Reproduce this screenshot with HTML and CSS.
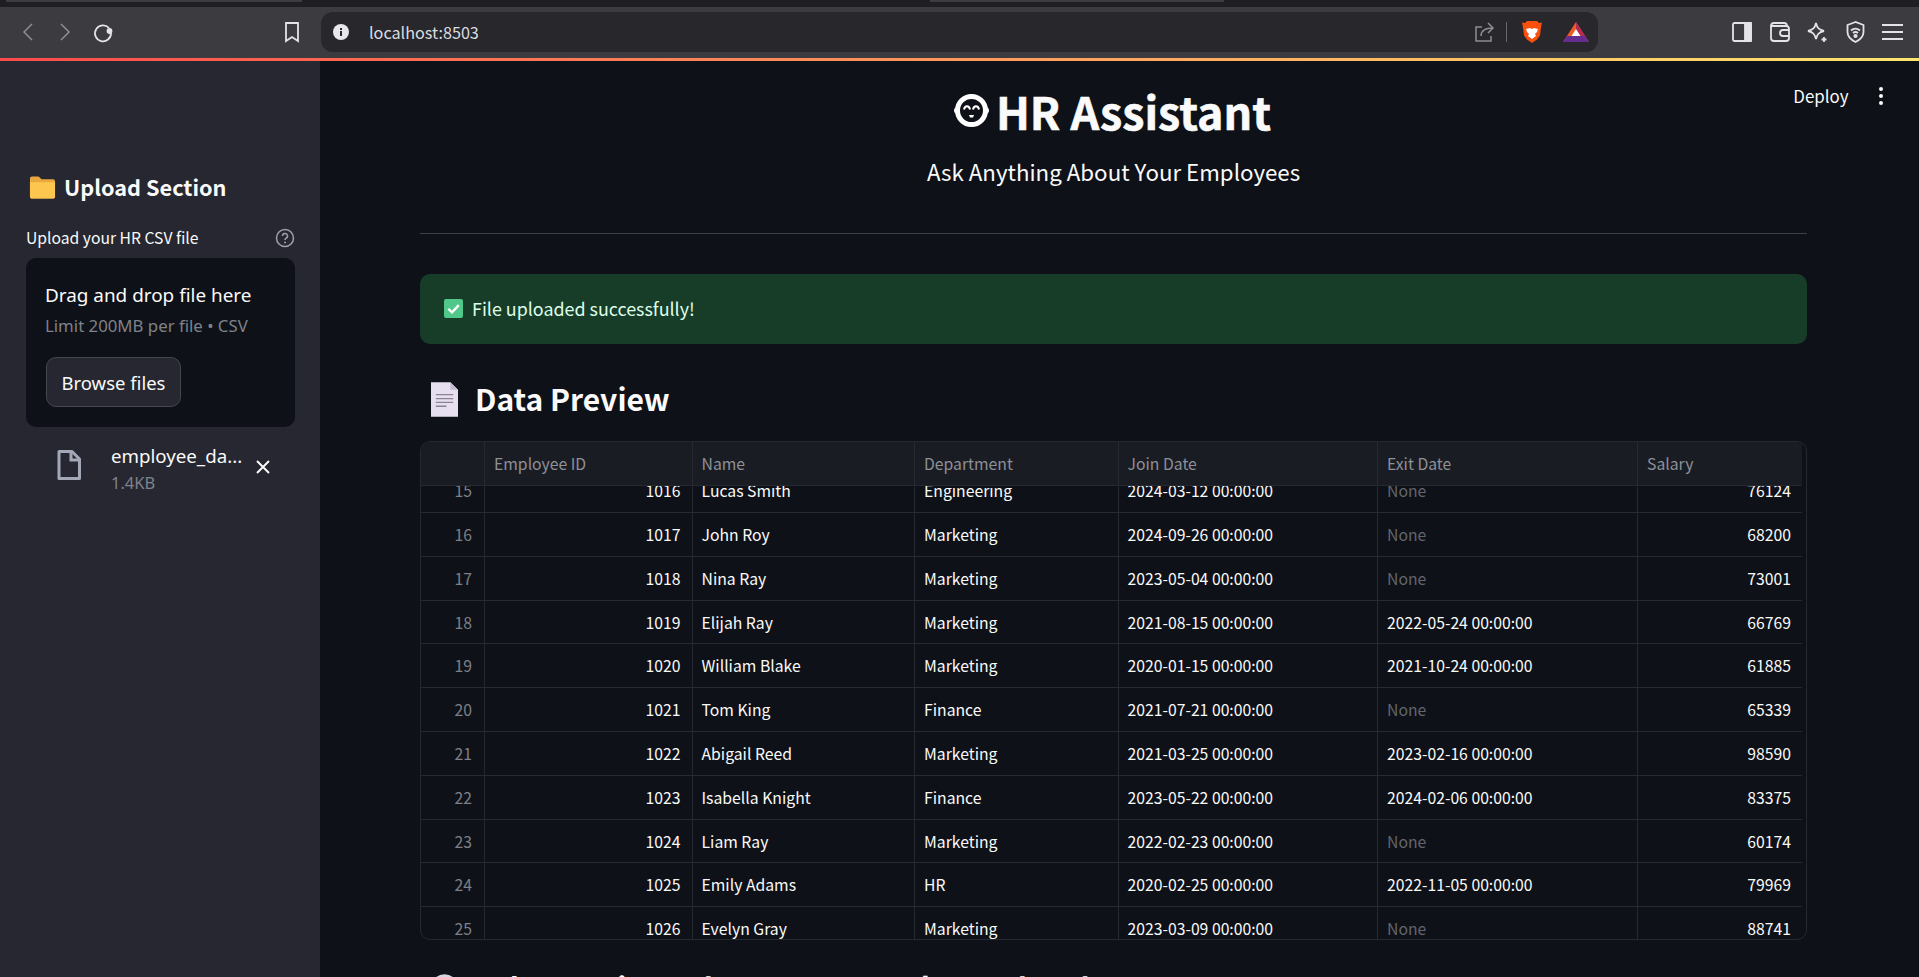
FILE: index.html
```html
<!DOCTYPE html>
<html lang="en">
<head>
  <meta charset="UTF-8" />
  <title>HR Assistant</title>
  <link rel="stylesheet" href="styles.css">
</head>
<body>
  <div class="tabstrip"><i class="tab-a"></i><i class="tab-b"></i></div>
  <header class="toolbar">
    <div class="nav-icons">
      <svg width="20" height="24" viewBox="0 0 20 24" class="dim"><path d="M14 4 6 12l8 8" /></svg>
      <svg width="20" height="24" viewBox="0 0 20 24" class="dim"><path d="m6 4 8 8-8 8" /></svg>
      <svg width="22" height="24" viewBox="0 0 22 24"><path d="M17 8a8 8 0 1 0 2 5" /><circle class="fill" cx="17.500" cy="11" r="2" /></svg>
    </div>
    <svg class="bookmark" width="18" height="22" viewBox="0 0 18 22"><path d="M3 2h12v18l-6-4-6 4z" /></svg>
    <div class="addressbar">
      <svg width="16" height="16" viewBox="0 0 16 16"><circle cx="8" cy="8" r="8" fill="#e8e8ec" stroke="none" /><rect x="7" y="7" width="2" height="5" fill="#27272c" stroke="none" /><rect x="7" y="4" width="2" height="2" fill="#27272c" stroke="none" /></svg>
      <span class="url">localhost:8503</span>
      <div class="addr-right">
        <svg class="dim" width="20" height="20" viewBox="0 0 20 20"><path d="M7 5H1v14h15v-5M6 14c0-5 4-8 12-8M13 1l5 5-5 5" /></svg>
        <i class="addr-sep"></i>
        <svg class="lion" width="20" height="22" viewBox="0 0 20 22"><path class="fill-lion" d="M5 0h10l2 2 3-.5-1 5-1 8-3 4-5 3.500-5-3.500-3-4-1-8-1-5L3 2z" /><path class="fill-white" d="M4 8l4-1 2 1 2-1 4 1-1 3-2 2 1 2-4 3-4-3 1-2-2-2z" /></svg>
        <svg class="bat" width="26" height="20" viewBox="0 0 26 20"><path d="M13 0 0 20h26z" class="bat-orange" /><path d="M13 0v14h9l4 6z" class="bat-red" /><path d="M0 20l4-6h18l4 6z" class="bat-purple" /><path d="m13 7 4.500 7h-9z" class="fill-white" /></svg>
      </div>
    </div>
    <div class="tool-icons">
      <svg width="20" height="20" viewBox="0 0 20 20"><rect x="1" y="1" width="18" height="18" rx="1.500" /><rect class="fill" x="13" y="1" width="6" height="18" /></svg>
      <svg width="20" height="20" viewBox="0 0 20 20"><path d="M1 4c0-2 1-3 3-3h10c2 0 3 1 3 3M1 4v12c0 2 1 3 3 3h12c2 0 3-1 3-3V7c0-2-1-3-3-3H1M19 8h-6a2.500 2.500 0 0 0 0 6h6" /></svg>
      <svg width="21" height="22" viewBox="0 0 21 22"><path d="M9 2c1 5 3 7 8 8-5 1-7 3-8 8-1-5-3-7-8-8 5-1 7-3 8-8zM17 16v5M14.500 18.500h5" /></svg>
      <svg width="19" height="22" viewBox="0 0 19 22"><path d="M9.500 1 1.500 4v7c0 5 4 8 8 10 4-2 8-5 8-10V4zM5 9.500c3-2.500 6-2.500 9 0M7 12c1.500-1.200 3.500-1.200 5 0" /><circle class="fill" cx="9.500" cy="15" r="1.200" /></svg>
      <svg width="21" height="18" viewBox="0 0 21 18"><path d="M0 2h21M0 9h21M0 16h21" /></svg>
    </div>
  </header>
  <div class="progress-line"></div>

  <div class="app">
    <aside class="sidebar">
      <h2 class="side-title">
        <svg width="27" height="24" viewBox="0 0 28 24"><path d="M1 3c0-1 1-2 2-2h7l3 3h12c1 0 2 1 2 2v16c0 1-1 2-2 2H3c-1 0-2-1-2-2z" fill="#e9a93f" /><path d="M1 7h26v15c0 1-1 2-2 2H3c-1 0-2-1-2-2z" fill="#fdc74f" /></svg>
        Upload Section
      </h2>
      <div class="upload-label">
        <span>Upload your HR CSV file</span>
        <svg width="20" height="20" viewBox="0 0 20 20"><circle cx="10" cy="10" r="8.500" /><path d="M7.500 8a2.500 2.500 0 1 1 3.700 2.200c-.8.500-1.200 1-1.200 1.800" /><circle class="fill" cx="10" cy="14.500" r="1" /></svg>
      </div>
      <div class="dropzone">
        <div class="drop-main">Drag and drop file here</div>
        <div class="drop-limit">Limit 200MB per file • CSV</div>
        <button class="browse">Browse files</button>
      </div>
      <div class="file-row">
        <svg class="file-icon" width="24" height="30" viewBox="0 0 24 30"><path d="M2 1.500h13L22.500 9v19.500H2z" fill="none" stroke="#a3a8b8" stroke-width="3" stroke-linejoin="round" /><path d="M14 1v9h9" fill="none" stroke="#a3a8b8" stroke-width="3" /></svg>
        <div class="file-info">
          <div class="file-name">employee_da...</div>
          <div class="file-size">1.4KB</div>
        </div>
        <svg class="file-x" width="16" height="16" viewBox="0 0 16 16"><path d="m2 2 12 12M14 2 2 14" /></svg>
      </div>
    </aside>

    <main class="main">
      <div class="deploy">
        <span>Deploy</span>
        <span class="kebab"><i></i><i></i><i></i></span>
      </div>
      <div class="content">
        <h1 class="title">
          <svg width="35" height="33" viewBox="0 0 35 33"><rect x="0" y="13.500" width="35" height="6" rx="3" fill="#fff" /><circle cx="17.500" cy="16.500" r="14" fill="#0e1117" stroke="#fff" stroke-width="5" /><path d="M10 15.500c.8-4.500 5.200-4.500 6 0M19 15.500c.8-4.500 5.200-4.500 6 0" fill="none" stroke="#fff" stroke-width="2" /><path d="M15 21h5l-1 2.500h-3z" fill="#fff" /></svg>
          HR Assistant
        </h1>
        <div class="subtitle">Ask Anything About Your Employees</div>
        <hr class="divider" />
        <div class="alert">
          <svg width="19" height="19" viewBox="0 0 20 20"><rect width="20" height="20" rx="2" fill="#4fc88a" /><path d="m4.500 10.500 4 3.500 7-7.500" fill="none" stroke="#fff" stroke-width="2.500" /></svg>
          File uploaded successfully!
        </div>
        <h2 class="section">
          <svg width="27" height="35" viewBox="0 0 28 36"><path d="M0 0h20l8 8v28H0z" fill="#e6dff0" /><path d="M20 0l8 8h-8z" fill="#c4bcd2" /><path d="M5 13h18M5 17h18M5 21h18M5 25h11" stroke="#8a8496" stroke-width="1.300" /></svg>
          Data Preview
        </h2>
        <div class="table">
          <div class="thead">
            <div class="th"></div>
            <div class="th">Employee ID</div>
            <div class="th">Name</div>
            <div class="th">Department</div>
            <div class="th">Join Date</div>
            <div class="th">Exit Date</div>
            <div class="th">Salary</div>
          </div>
          <div class="tbody">
            <div class="rows" id="rows"></div>
          </div>
        </div>
        <h2 class="section next-heading">
          <svg width="27" height="35" viewBox="0 0 28 36"><rect width="28" height="36" rx="14" fill="#d8d4e4" /></svg>
          Ask questions about your employee data here
        </h2>
      </div>
    </main>
  </div>

  <script>
    const data = [
      [15, 1016, 'Lucas Smith', 'Engineering', '2024-03-12 00:00:00', 'None', 76124],
      [16, 1017, 'John Roy', 'Marketing', '2024-09-26 00:00:00', 'None', 68200],
      [17, 1018, 'Nina Ray', 'Marketing', '2023-05-04 00:00:00', 'None', 73001],
      [18, 1019, 'Elijah Ray', 'Marketing', '2021-08-15 00:00:00', '2022-05-24 00:00:00', 66769],
      [19, 1020, 'William Blake', 'Marketing', '2020-01-15 00:00:00', '2021-10-24 00:00:00', 61885],
      [20, 1021, 'Tom King', 'Finance', '2021-07-21 00:00:00', 'None', 65339],
      [21, 1022, 'Abigail Reed', 'Marketing', '2021-03-25 00:00:00', '2023-02-16 00:00:00', 98590],
      [22, 1023, 'Isabella Knight', 'Finance', '2023-05-22 00:00:00', '2024-02-06 00:00:00', 83375],
      [23, 1024, 'Liam Ray', 'Marketing', '2022-02-23 00:00:00', 'None', 60174],
      [24, 1025, 'Emily Adams', 'HR', '2020-02-25 00:00:00', '2022-11-05 00:00:00', 79969],
      [25, 1026, 'Evelyn Gray', 'Marketing', '2023-03-09 00:00:00', 'None', 88741]
    ];
    const rows = document.getElementById('rows');
    data.forEach(r => {
      const div = document.createElement('div');
      div.className = 'row';
      div.innerHTML = `
        <div class="td idx">${r[0]}</div>
        <div class="td num">${r[1]}</div>
        <div class="td">${r[2]}</div>
        <div class="td">${r[3]}</div>
        <div class="td">${r[4]}</div>
        <div class="td ${r[5] === 'None' ? 'none' : ''}">${r[5]}</div>
        <div class="td num">${r[6]}</div>
      `;
      rows.appendChild(div);
    });
  </script>
</body>
</html>
```

FILE: styles.css
```css
:root {
  --bg: #0e1117;
  --side: #262730;
  --text: #fafafa;
  --muted: #7d8088;
  --line: #262a30;
  --cols: 64px 207.5px 222.5px 203.5px 259.5px 260px 164px;
}

html, body {
  margin: 0;
  height: 977px;
  overflow: hidden;
}

body {
  background: var(--bg);
  color: var(--text);
  font-family: "Noto Sans CJK SC", "Noto Sans", sans-serif;
  display: flex;
  flex-direction: column;
}

/* browser chrome */
.tabstrip {
  height: 7px;
  background: #1f1e23;
  flex: none;
  display: flex;
  align-items: flex-start;
}

.tabstrip i {
  height: 2px;
  background: #3b3b40;
}

.tab-a { width: 296px; margin-left: 6px; }
.tab-b { width: 294px; margin-left: 628px; }

.toolbar {
  height: 51px;
  flex: none;
  background: #3b3b40;
  display: flex;
  align-items: center;
  padding: 0 16px 1px 18px;
  box-sizing: border-box;
}

.toolbar svg {
  fill: none;
  stroke: #e4e4e8;
  stroke-width: 1.800;
}

.toolbar svg .fill,
.sidebar svg .fill { fill: #e4e4e8; }

.toolbar svg.dim { stroke: #8d8d93; stroke-width: 1.500; }

.nav-icons {
  display: flex;
  align-items: center;
  gap: 17px;
  width: 265px;
}

.bookmark { margin: 0 20px 0 0; }

.addressbar {
  width: 1277px;
  height: 40px;
  background: #27272c;
  border-radius: 12px;
  display: flex;
  align-items: center;
  padding: 0 9px 0 12px;
  box-sizing: border-box;
}

.url {
  font-size: 16.200px;
  color: #dcdce0;
  margin-left: 20px;
}

.addr-right {
  margin-left: auto;
  display: flex;
  align-items: center;
}

.addr-sep {
  width: 1px;
  height: 20px;
  background: #66666c;
  margin: 0 15px 0 11px;
}

.bat { margin-left: 21px; }

.toolbar svg .fill-lion { fill: #f9500e; stroke: none; }
.toolbar svg .fill-white { fill: #fff; stroke: none; }
.toolbar svg .bat-orange { fill: #f05a24; stroke: none; }
.toolbar svg .bat-red { fill: #b52a55; stroke: none; }
.toolbar svg .bat-purple { fill: #662d91; stroke: none; }

.tool-icons {
  margin-left: auto;
  display: flex;
  align-items: center;
  gap: 17.500px;
}

.progress-line {
  height: 3px;
  flex: none;
  background: linear-gradient(90deg, #ff4b4b, #ffe66d);
}

/* app */
.app {
  flex: 1;
  display: flex;
  min-height: 0;
}

.sidebar {
  width: 320px;
  flex: none;
  background: var(--side);
  padding: 108px 25px 0 26px;
  box-sizing: border-box;
}

.side-title {
  margin: 0 0 21px 3px;
  font-size: 21.700px;
  font-weight: 600;
  display: flex;
  align-items: center;
  gap: 8px;
  line-height: 36px;
}

.upload-label {
  display: flex;
  align-items: center;
  justify-content: space-between;
  font-size: 15.700px;
  line-height: 24px;
  margin-bottom: 8px;
}

.upload-label svg {
  fill: none;
  stroke: #a0a1a8;
  stroke-width: 1.500;
}

.sidebar svg .fill { fill: #a0a1a8; stroke: none; }

.dropzone {
  background: var(--bg);
  border-radius: 10px;
  padding: 22px 19px 0;
  height: 169px;
  box-sizing: border-box;
  font-family: "Noto Sans", sans-serif;
}

.drop-main {
  font-size: 18.900px;
  line-height: 30px;
}

.drop-limit {
  font-size: 16.800px;
  color: #7f828a;
  line-height: 28px;
  margin-top: 2px;
}

.browse {
  display: block;
  margin: 17px 0 0 1px;
  width: 135px;
  height: 50px;
  background: #262730;
  color: var(--text);
  border: 1px solid #45464f;
  border-radius: 10px;
  font-family: inherit;
  font-size: 18.500px;
  padding: 0;
}

.file-row {
  display: flex;
  align-items: flex-start;
  margin-top: 15px;
  padding-left: 31px;
  font-family: "Noto Sans", sans-serif;
}

.file-icon { margin-top: 8px; }

.file-info {
  margin-left: 30px;
  width: 144px;
}

.file-name {
  font-size: 18.700px;
  line-height: 28px;
}

.file-size {
  font-size: 16.500px;
  color: #7f828a;
  line-height: 26px;
}

.file-x {
  fill: none;
  stroke: #fafafa;
  stroke-width: 2;
  margin-top: 17px;
}

.main {
  flex: 1;
  position: relative;
  min-width: 0;
  overflow: hidden;
}

.deploy {
  position: absolute;
  top: 17px;
  right: 36px;
  display: flex;
  align-items: center;
  gap: 30px;
  font-size: 16.900px;
  line-height: 36px;
}

.kebab {
  display: flex;
  flex-direction: column;
  gap: 2.500px;
}

.kebab i {
  width: 4.500px;
  height: 4.500px;
  border-radius: 50%;
  background: var(--text);
}

.content {
  width: 1387px;
  margin: 0 0 0 100px;
}

.title {
  margin: 17.500px 0 0;
  font-size: 44.800px;
  font-weight: 700;
  line-height: 64px;
  text-align: center;
  display: flex;
  justify-content: center;
  align-items: center;
  gap: 7px;
  -webkit-text-stroke: 0.6px #fafafa;
}

.title svg { margin-left: -2px; }

.subtitle {
  text-align: center;
  font-size: 22.300px;
  line-height: 36px;
  margin-top: 10px;
}

.divider {
  border: none;
  border-top: 1px solid #3d4047;
  margin: 44.500px 0 40px;
}

.alert {
  height: 70px;
  background: #173d29;
  border-radius: 10px;
  color: #dffde9;
  font-size: 17.900px;
  display: flex;
  align-items: center;
  gap: 9px;
  padding: 0 0 2px 24px;
  box-sizing: border-box;
}

.section {
  margin: 33px 0 0 11px;
  height: 46px;
  padding-bottom: 5px;
  box-sizing: border-box;
  font-size: 30px;
  font-weight: 600;
  display: flex;
  align-items: center;
  gap: 17px;
}

.section svg { margin-top: 3px; }

.table {
  margin-top: 18px;
  height: 499px;
  border: 1px solid var(--line);
  border-radius: 10px;
  overflow: hidden;
  box-sizing: border-box;
  display: flex;
  flex-direction: column;
  font-size: 15.750px;
}

.thead {
  display: grid;
  grid-template-columns: var(--cols);
  height: 44px;
  flex: none;
  background: #1a1c24;
  border-bottom: 1px solid var(--line);
  box-sizing: border-box;
  width: 1381px;
  color: #8d9097;
}

.th {
  border-right: 1px solid var(--line);
  padding: 0 9px;
  line-height: 43px;
}

.th:last-child { border-right: none; }

.tbody {
  flex: 1;
  overflow: hidden;
  min-height: 0;
}

.rows {
  margin-top: -16.800px;
}

.row {
  display: grid;
  grid-template-columns: var(--cols);
  height: 43.800px;
  border-bottom: 1px solid var(--line);
  box-sizing: border-box;
  width: 1381px;
}

.td {
  border-right: 1px solid var(--line);
  padding: 0 9px;
  line-height: 43px;
  white-space: nowrap;
}

.td:last-child { border-right: none; }

.td.num { text-align: right; padding-right: 11px; }

.td.idx { text-align: right; color: var(--muted); padding-right: 12px; }

.td.none { color: #62656c; }

.next-heading {
  margin-top: 26.500px;
  white-space: nowrap;
}

.next-heading svg { margin-top: 8px; }
```
